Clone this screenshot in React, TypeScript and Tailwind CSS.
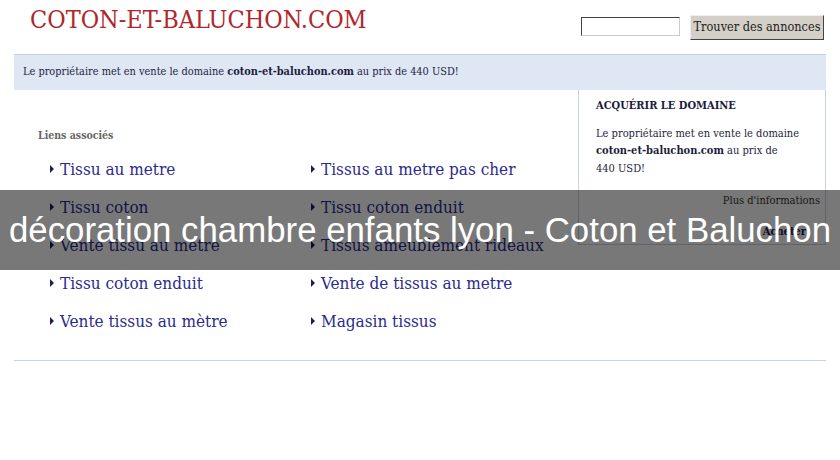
import React from "react";

const links: [string, string][] = [
  ["Tissu au metre", "Tissus au metre pas cher"],
  ["Tissu coton", "Tissu coton enduit"],
  ["Vente tissu au metre", "Tissus ameublement rideaux"],
  ["Tissu coton enduit", "Vente de tissus au metre"],
  ["Vente tissus au mètre", "Magasin tissus"],
];

const serif = "font-['DejaVu_Serif',serif]";

const LinkItem = ({ label }: { label: string }) => (
  <a href="#" className="flex items-center gap-[6px] h-[22px] text-[#2b2b8f] text-[17px] leading-[22px] [font-stretch:condensed]">
    <span className="inline-block w-0 h-0 border-y-[4px] border-y-transparent border-l-[4px] border-l-[#1d1d5a]" />
    {label}
  </a>
);

export default function App() {
  return (
    <div className={`relative w-[840px] h-[460px] bg-white overflow-hidden ${serif}`}>
      {/* top: logo + search */}
      <div className="flex items-start justify-between h-[54px] pl-[30px] pr-[16px]">
        <div className="pt-[5px] text-[#b0262b] text-[25px] leading-[30px] [font-stretch:condensed]">
          COTON-ET-BALUCHON.COM
        </div>
        <div className="flex items-start gap-[10px] pt-[15px]">
          <input
            type="text"
            className="mt-[2px] w-[99px] h-[19px] bg-white border border-[#ccc] border-t-[#444] border-l-[#444]"
          />
          <button className="h-[25px] w-[134px] bg-[#d4d0c8] text-[#222] text-[12.6px] border border-[#eee] border-r-[#444] border-b-[#444] [font-stretch:condensed]">
            Trouver des annonces
          </button>
        </div>
      </div>

      <div className="mx-[14px]">
        {/* sale bar */}
        <div className="h-[36px] flex items-center px-[9px] bg-[#dfe7f5] border-t border-[#c5d2e4] text-[10.9px] text-[#1d1d3d] [font-stretch:condensed]">
          <span>
            Le propriétaire met en vente le domaine{" "}
            <b>coton-et-baluchon.com</b> au prix de 440 USD!
          </span>
        </div>

        <div className="flex h-[270px]">
          {/* related links */}
          <div className="flex-1 pt-[38px] pl-[24px]">
            <div className="text-[10.5px] font-bold text-[#666] [font-stretch:condensed]">Liens associés</div>
            <div className="grid grid-cols-[261px_1fr] pl-[12px] mt-[14px] gap-y-[16px]">
              {links.flatMap(([a, b]) => [
                <LinkItem key={a + "1"} label={a} />,
                <LinkItem key={b + "2"} label={b} />,
              ])}
            </div>
          </div>

          {/* buy box */}
          <div className="w-[248px] h-[155px] border-x border-b border-[#c9d3de] pl-[17px] pr-[5px] pt-[8px] text-[11px] text-[#1d1d3d] [font-stretch:condensed] flex flex-col">
            <div className="font-bold text-[#1d1d3d]">ACQUÉRIR LE DOMAINE</div>
            <p className="mt-[10px] leading-[17.5px]">
              Le propriétaire met en vente le domaine
              <br />
              <b>coton-et-baluchon.com</b> au prix de
              <br />
              440 USD!
            </p>
            <div className="mt-[16px] text-right text-[#333]">Plus d'informations</div>
            <div className="mt-[14px] pr-[14px] text-right font-bold text-[#1d1d5a]">Acheter</div>
          </div>
        </div>

        <div className="border-t border-[#c9d6e2]" />
      </div>

      {/* title overlay */}
      <div className="absolute left-0 right-0 top-[190px] h-[80px] bg-black/[0.53] flex items-center justify-center">
        <h1 className="font-['Liberation_Sans',Arial,sans-serif] text-white text-[34.8px] leading-none whitespace-nowrap">
          décoration chambre enfants lyon - Coton et Baluchon
        </h1>
      </div>
    </div>
  );
}
